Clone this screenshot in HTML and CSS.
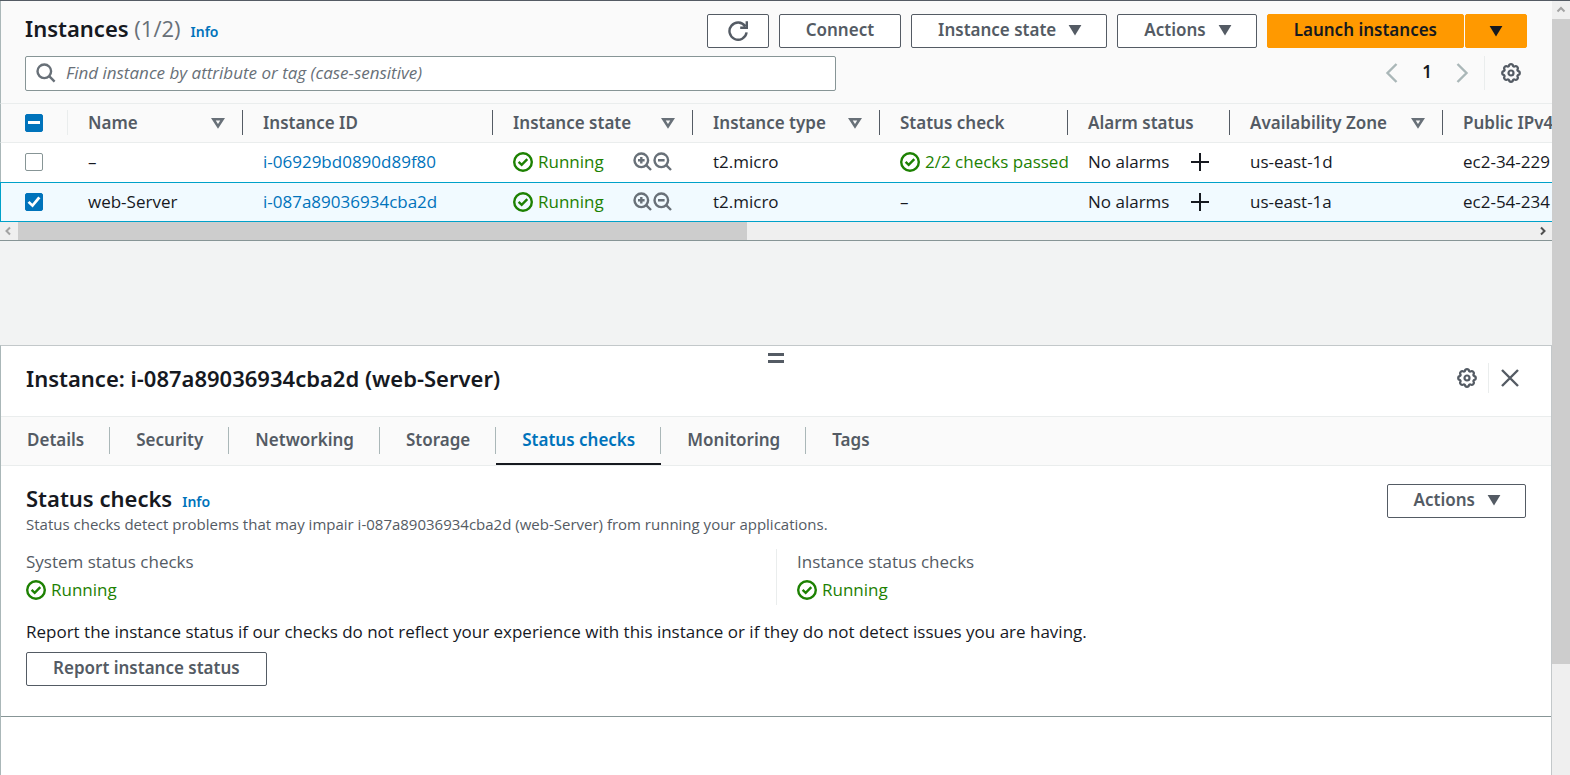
FILE: index.html
```html
<!DOCTYPE html>
<html lang="en">
<head>
<meta charset="utf-8">
<title>Instances</title>
<link rel="stylesheet" href="styles.css">
</head>
<body>
<svg class="sprite" aria-hidden="true">
  <symbol id="ok" viewBox="0 0 20 20"><circle cx="10" cy="10" r="8.8"/><path d="M5.6 9.8l3.1 3 5.6-5.6"/></symbol>
  <symbol id="zin" viewBox="0 0 20 20"><circle cx="8.3" cy="8.3" r="6.8"/><path d="M13.2 13.2l4.8 4.8M8.3 5v6.6M5 8.3h6.6"/></symbol>
  <symbol id="zout" viewBox="0 0 20 20"><circle cx="8.3" cy="8.3" r="6.8"/><path d="M13.2 13.2l4.8 4.8M5 8.3h6.6"/></symbol>
  <symbol id="plus" viewBox="0 0 20 20"><path d="M10 1v18M1 10h18"/></symbol>
  <symbol id="sort" viewBox="0 0 14 12"><path d="M2.4 2.3h9.2L7 9.4z"/></symbol>
  <symbol id="caret" viewBox="0 0 14 12"><path d="M.6 1h12.8L7 11.4z" fill="currentColor"/></symbol>
  <symbol id="gear" viewBox="0 0 20 20"><path d="M10 1.2Q11.800 1.200 12.200 3.200Q12.600 3.600 13.100 3.600Q15 2.500 16.200 3.800Q17.500 5 16.400 6.900Q16.400 7.400 16.800 7.800Q18.800 8.200 18.800 10Q18.800 11.800 16.800 12.200Q16.400 12.600 16.400 13.100Q17.500 15 16.200 16.200Q15 17.500 13.100 16.400Q12.600 16.400 12.200 16.800Q11.800 18.800 10 18.800Q8.200 18.800 7.800 16.800Q7.400 16.400 6.900 16.400Q5 17.500 3.800 16.200Q2.500 15 3.600 13.100Q3.600 12.600 3.200 12.200Q1.200 11.800 1.200 10Q1.200 8.200 3.200 7.800Q3.600 7.400 3.600 6.900Q2.500 5 3.800 3.800Q5 2.500 6.900 3.600Q7.400 3.600 7.800 3.200Q8.200 1.200 10 1.200z" stroke-width="2.2"/><circle cx="10" cy="10" r="2.5" stroke-width="2.2"/></symbol>
</svg>
<div class="app">
<main class="page">
  <section class="toolbar">
    <div class="toolbar-row">
      <div class="heading">
        <h1>Instances <span class="count">(1/2)</span></h1>
        <a class="info" href="#info">Info</a>
      </div>
      <div class="actions">
        <button class="btn btn-icon" aria-label="Refresh"><svg class="i20 mid" viewBox="0 0 20 20"><path d="M18.6 11.4A8.600 8.600 0 1 1 17.200 5.300M18.800 .3v6.400h-6.600"/></svg></button>
        <button class="btn">Connect</button>
        <button class="btn">Instance state <svg class="caret"><use href="#caret"/></svg></button>
        <button class="btn">Actions <svg class="caret"><use href="#caret"/></svg></button>
        <div class="split">
          <button class="btn primary">Launch instances</button>
          <button class="btn btn-icon primary" aria-label="More launch options"><svg class="caret"><use href="#caret"/></svg></button>
        </div>
      </div>
    </div>
    <div class="toolbar-row">
      <label class="search">
        <svg class="i20 mid" viewBox="0 0 20 20"><circle cx="8.3" cy="8.3" r="6.8"/><path d="M13.2 13.2l5.4 5.4"/></svg>
        <input type="text" aria-label="Find instance" placeholder="Find instance by attribute or tag (case-sensitive)">
      </label>
      <div class="pager">
        <button class="plain faint" aria-label="Previous page"><svg class="i20 mid" viewBox="0 0 20 20"><path d="M14.500 1L5.500 10l9 9"/></svg></button>
        <button class="plain page-no">1</button>
        <button class="plain faint" aria-label="Next page"><svg class="i20 mid" viewBox="0 0 20 20"><path d="M5.500 1l9 9-9 9"/></svg></button>
        <span class="rule"></span>
        <button class="plain" aria-label="Preferences"><svg class="i20"><use href="#gear"/></svg></button>
      </div>
    </div>
  </section>

  <div class="table-wrap">
    <table>
      <colgroup><col class="c-check"><col class="c-name"><col class="c-id"><col class="c-state"><col class="c-type"><col class="c-status"><col class="c-alarm"><col class="c-zone"><col></colgroup>
      <thead>
        <tr>
          <th><div class="head soft"><input type="checkbox" class="check some" aria-label="Select all"></div></th>
          <th><div class="head">Name <svg class="sort"><use href="#sort"/></svg></div></th>
          <th><div class="head">Instance ID</div></th>
          <th><div class="head">Instance state <svg class="sort"><use href="#sort"/></svg></div></th>
          <th><div class="head">Instance type <svg class="sort"><use href="#sort"/></svg></div></th>
          <th><div class="head">Status check</div></th>
          <th><div class="head">Alarm status</div></th>
          <th><div class="head">Availability Zone <svg class="sort"><use href="#sort"/></svg></div></th>
          <th><div class="head">Public IPv4</div></th>
        </tr>
      </thead>
      <tbody>
        <tr>
          <td><div class="cell"><input type="checkbox" class="check" aria-label="Select i-06929bd0890d89f80"></div></td>
          <td>–</td>
          <td><a href="#i1">i-06929bd0890d89f80</a></td>
          <td><div class="cell"><span class="ok"><svg class="i20 mid"><use href="#ok"/></svg>Running</span><span class="zooms"><svg class="i20 mid"><use href="#zin"/></svg><svg class="i20 mid"><use href="#zout"/></svg></span></div></td>
          <td>t2.micro</td>
          <td><span class="ok"><svg class="i20 mid"><use href="#ok"/></svg>2/2 checks passed</span></td>
          <td><div class="cell">No alarms <button class="plain" aria-label="Add alarm"><svg class="i20"><use href="#plus"/></svg></button></div></td>
          <td>us-east-1d</td>
          <td>ec2-34-229</td>
        </tr>
        <tr class="selected">
          <td><div class="cell"><input type="checkbox" class="check" checked aria-label="Select web-Server"></div></td>
          <td>web-Server</td>
          <td><a href="#i2">i-087a89036934cba2d</a></td>
          <td><div class="cell"><span class="ok"><svg class="i20 mid"><use href="#ok"/></svg>Running</span><span class="zooms"><svg class="i20 mid"><use href="#zin"/></svg><svg class="i20 mid"><use href="#zout"/></svg></span></div></td>
          <td>t2.micro</td>
          <td>–</td>
          <td><div class="cell">No alarms <button class="plain" aria-label="Add alarm"><svg class="i20"><use href="#plus"/></svg></button></div></td>
          <td>us-east-1a</td>
          <td>ec2-54-234</td>
        </tr>
      </tbody>
    </table>
    <div class="hscroll">
      <svg class="arrow dim" viewBox="0 0 18 18"><path d="M10 5.5L6.5 9l3.5 3.5"/></svg>
      <div class="hthumb"></div>
      <svg class="arrow" viewBox="0 0 18 18"><path d="M7 5.5L10.5 9 7 12.5"/></svg>
    </div>
  </div>

  <section class="panel">
    <header class="panel-head">
      <div class="grip"></div>
      <h2>Instance: i-087a89036934cba2d (web-Server)</h2>
      <div class="panel-tools">
        <button class="plain" aria-label="Panel preferences"><svg class="i20"><use href="#gear"/></svg></button>
        <span class="rule"></span>
        <button class="plain" aria-label="Close"><svg class="i20 mid" viewBox="0 0 20 20"><path d="M2 2l16 16M18 2L2 18"/></svg></button>
      </div>
    </header>
    <nav class="tabs">
      <a href="#details">Details</a>
      <a href="#security">Security</a>
      <a href="#networking">Networking</a>
      <a href="#storage">Storage</a>
      <a href="#status" class="active">Status checks</a>
      <a href="#monitoring">Monitoring</a>
      <a href="#tags">Tags</a>
    </nav>
    <div class="status">
      <div class="status-head">
        <div>
          <div class="heading"><h2>Status checks</h2><a class="info" href="#info2">Info</a></div>
          <p class="desc">Status checks detect problems that may impair i-087a89036934cba2d (web-Server) from running your applications.</p>
        </div>
        <button class="btn">Actions <svg class="caret"><use href="#caret"/></svg></button>
      </div>
      <div class="checks">
        <div><div class="label">System status checks</div><span class="ok"><svg class="i20 mid"><use href="#ok"/></svg>Running</span></div>
        <div><div class="label">Instance status checks</div><span class="ok"><svg class="i20 mid"><use href="#ok"/></svg>Running</span></div>
      </div>
      <p class="report">Report the instance status if our checks do not reflect your experience with this instance or if they do not detect issues you are having.</p>
      <button class="btn">Report instance status</button>
    </div>
  </section>
</main>
<div class="vscroll">
  <svg class="arrow dim" viewBox="0 0 18 18"><path d="M5.5 10.5L9 7l3.5 3.5"/></svg>
  <div class="vthumb"></div>
</div>
</div>
</body>
</html>
```
FILE: styles.css
```css
* { box-sizing: border-box; }

body {
  margin: 0;
  background: #fff;
  color: #16191f;
  font: 17px/24px "Open Sans", "Noto Sans", sans-serif;
}

h1, h2, p { margin: 0; }
h1, h2 { font-size: 22px; line-height: 28px; }
h1, h2, th, .btn, .info, .plain.page-no, .tabs a { font-family: "Noto Sans", sans-serif; font-weight: 600; }
a { color: #0073bb; text-decoration: none; }
button, input { font: inherit; color: inherit; margin: 0; }

svg { fill: none; stroke: currentColor; stroke-width: 2; flex: none; display: block; }
.sprite { position: absolute; width: 0; height: 0; }
.i20 { width: 20px; height: 20px; }
.mid { stroke-width: 2.4; }
.caret { width: 14px; height: 12px; stroke: none; }
.sort { width: 14px; height: 12px; color: #687078; margin-left: auto; stroke-width: 2.6; }

.app {
  display: grid;
  grid-template-columns: minmax(0, 1fr) 18px;
  min-height: 100vh;
  border-top: 1px solid #545b64;
}
.page { display: flex; flex-direction: column; background: #f2f3f3; }

/* Toolbar */
.toolbar {
  padding: 13px 25px 12px 24px;
  background: #fafafa;
  border-left: 1px solid #aab7b8;
  display: flex;
  flex-direction: column;
  gap: 8px;
}
.toolbar-row { display: flex; justify-content: space-between; align-items: flex-start; }
.heading { display: flex; align-items: baseline; gap: 10px; }
.count { font-family: "Open Sans", sans-serif; font-weight: 400; color: #687078; }
.info { font-size: 14px; line-height: 20px; }
.actions { display: flex; gap: 10px; }
.split { display: flex; gap: 1px; }

.btn {
  display: inline-flex;
  align-items: center;
  justify-content: center;
  gap: 12px;
  height: 34px;
  padding: 0 26px 2px;
  border: 1px solid #545b64;
  border-radius: 2px;
  background: #fff;
  color: #545b64;
  white-space: nowrap;
}
.btn .caret { margin-right: -2px; }
.btn-icon { width: 62px; padding: 0; }
.btn-icon .caret { margin: 0; }
.primary { background: #ff9900; border-color: #ff9900; color: #16191f; }

.search {
  display: flex;
  align-items: center;
  gap: 10px;
  width: 54%;
  height: 35px;
  padding: 0 10px 2px;
  border: 1px solid #879596;
  border-radius: 2px;
  background: #fff;
  color: #687078;
}
.search input { flex: 1; min-width: 0; padding: 0; border: 0; outline: 0; background: none; }
.search input::placeholder { color: #687078; opacity: 1; font-style: italic; }

.plain { display: flex; padding: 0; border: 0; background: none; color: inherit; }
.plain.faint { color: #aab7b8; }
.pager { display: flex; align-items: center; color: #545b64; padding-right: 6px; }
.plain.page-no { padding: 0 20px 2px; color: #16191f; }
.rule { width: 1px; height: 34px; margin: 0 16px 0 12px; background: #eaeded; }

/* Table */
.table-wrap { overflow: hidden; margin-bottom: 104px; border-bottom: 1px solid #879596; background: #fff; }
table { width: 100%; table-layout: fixed; border-spacing: 0; }
.c-check { width: 68px; }
.c-name { width: 175px; }
.c-id { width: 250px; }
.c-state { width: 200px; }
.c-type { width: 187px; }
.c-status { width: 188px; }
.c-alarm { width: 162px; }
.c-zone { width: 213px; }

th {
  padding: 6px 0 7px;
  background: #fafafa;
  border-top: 1px solid #eaeded;
  border-bottom: 1px solid #eaeded;
  color: #545b64;
  text-align: left;
}
.head {
  display: flex;
  align-items: center;
  height: 25px;
  padding: 0 17px 0 20px;
  border-right: 1px solid #545b64;
  white-space: nowrap;
}
.head.soft { border-color: #eaeded; }
th:last-child .head { border: 0; }
td {
  height: 39px;
  padding: 0 0 2px 20px;
  white-space: nowrap;
  overflow: hidden;
}
th:first-child, td:first-child { border-left: 1px solid #aab7b8; }
th:first-child .head, td:first-child { padding-left: 24px; }
.selected td {
  height: 40px;
  padding-bottom: 0;
  background: #f1faff;
  border-top: 1px solid #00a1c9;
  border-bottom: 1px solid #00a1c9;
}
.selected td:first-child { border-left-color: #00a1c9; }
.cell { display: flex; align-items: center; justify-content: space-between; padding-right: 20px; }
.zooms { display: flex; color: #687078; }
.ok { display: flex; align-items: center; gap: 5px; color: #1d8102; }

.check {
  appearance: none;
  display: grid;
  place-items: center;
  width: 18px;
  height: 18px;
  border: 1px solid #879596;
  border-radius: 2px;
  background: #fff;
}
.check:checked, .check.some { border-color: #0073bb; background: #0073bb; }
.check.some::after { content: ""; width: 12px; height: 3px; background: #fff; }
.check:checked::after {
  content: "";
  width: 14px;
  height: 12px;
  background: #fff;
  clip-path: polygon(4% 56%, 18% 42%, 38% 64%, 80% 4%, 96% 18%, 40% 96%);
}

/* Scroll bars */
.hscroll { display: flex; height: 18px; background: #efefef; }
.hthumb { width: 47%; margin-right: auto; background: #cdcdcd; }
.arrow { width: 18px; height: 18px; color: #505050; }
.dim { color: #a3a3a3; }
.vscroll { display: flex; flex-direction: column; background: #efefef; }
.vthumb { height: 645px; background: #cdcdcd; }

/* Split panel */
.panel {
  flex: 1;
  background: #fff;
  border: 1px solid #c3c8ca;
  border-width: 1px 1px 0;
  border-left-color: #aab7b8;
}
.panel-head {
  position: relative;
  display: flex;
  align-items: center;
  justify-content: space-between;
  height: 70px;
  padding: 0 31px 6px 25px;
}
.grip {
  position: absolute;
  top: 7px;
  left: calc(50% - 8px);
  width: 16px;
  height: 10px;
  border: solid #545b64;
  border-width: 3px 0;
}
.panel-tools { display: flex; align-items: center; color: #545b64; }
.panel-tools .rule { height: 30px; margin: 0 11px; }

.tabs {
  display: flex;
  height: 50px;
  background: #fafafa;
  border: solid #eaeded;
  border-width: 1px 0;
}
.tabs a {
  position: relative;
  padding: 11px 26px 0;
  color: #545b64;
}
.tabs a:not(:last-child)::before {
  content: "";
  position: absolute;
  top: 10px;
  right: 0;
  width: 1px;
  height: 27px;
  background: #aab7b8;
}
.tabs .active { color: #0073bb; }
.tabs .active::after {
  content: "";
  position: absolute;
  left: 0;
  right: 0;
  bottom: 0;
  height: 2px;
  background: #16191f;
}

.status { padding: 18px 25px 30px; border-bottom: 1px solid #879596; }
.status-head { display: flex; justify-content: space-between; align-items: flex-start; }
.desc { font-size: 15px; line-height: 24px; color: #545b64; }
.checks { display: grid; grid-template-columns: 1fr 1fr; margin: 13px 0 12px; color: #545b64; }
.checks > div { display: flex; flex-direction: column; gap: 4px; padding: 1px 0 3px; }
.checks > div + div { padding-left: 20px; border-left: 1px solid #eaeded; }
.report { margin: 15px 0 8px; }
```
